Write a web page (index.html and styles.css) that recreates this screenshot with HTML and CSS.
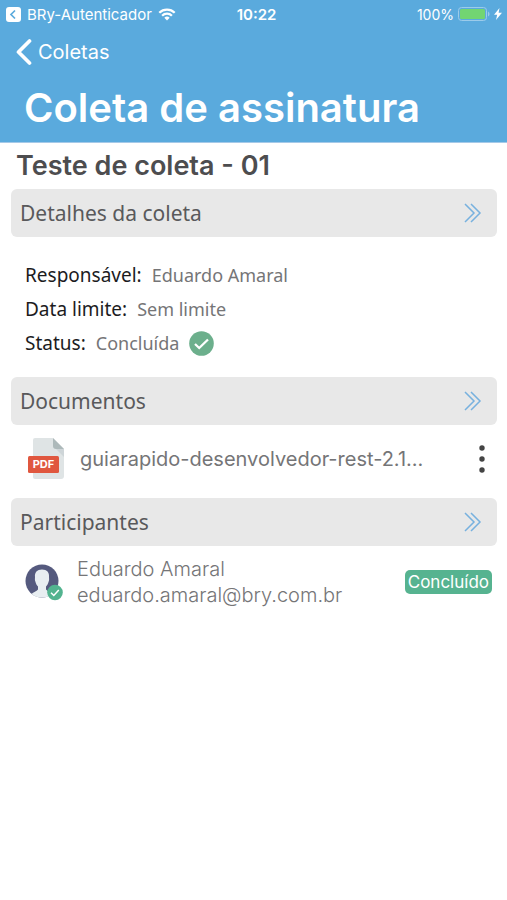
FILE: index.html
```html
<!DOCTYPE html>
<html lang="pt-BR">
<head>
<meta charset="utf-8">
<meta name="viewport" content="width=device-width, initial-scale=1">
<title>Coleta de assinatura</title>
<link rel="stylesheet" href="styles.css">
</head>
<body>
<header class="header">
  <div class="status-bar">
    <a class="return-app" href="#">
      <svg width="15" height="15" viewBox="0 0 15 15" aria-hidden="true"><rect width="15" height="15" rx="3" fill="#fff"/><path d="M9 3.5 5 7.5l4 4" fill="none" stroke="#5aaadd" stroke-width="1.7"/></svg>
      <span>BRy-Autenticador</span>
      <svg width="18" height="13" viewBox="0 0 18 13" aria-hidden="true"><g fill="none" stroke="#fff" stroke-width="2.3"><path d="M1.3 4.7a11 11 0 0 1 15.4 0"/><path d="M4.1 7.7a7 7 0 0 1 9.8 0"/></g><path d="M6.3 9.8a3.9 3.9 0 0 1 5.4 0L9 12.5z" fill="#fff"/></svg>
    </a>
    <time class="clock">10:22</time>
    <div class="battery">
      <span>100%</span>
      <svg width="32" height="14" viewBox="0 0 32 14" aria-hidden="true"><rect x=".5" y=".5" width="28" height="13" rx="3" fill="none" stroke="#9ccbea"/><rect x="2" y="2" width="25" height="10" rx="1.5" fill="#72d572"/><path d="M30 4.5q1.6 1 1.6 2.500t-1.600 2.500z" fill="#9ccbea"/></svg>
      <svg width="8" height="12" viewBox="0 0 8 12" aria-hidden="true"><path d="M5.500 0 0 6.800h3.200L2 12l6-7.200H4.600z" fill="#fff"/></svg>
    </div>
  </div>
  <nav>
    <a class="back" href="#">
      <svg width="16" height="26" viewBox="0 0 16 26" aria-hidden="true"><path d="M13.500 2 2.500 13l11 11" fill="none" stroke="#fff" stroke-width="3.700" stroke-linecap="round" stroke-linejoin="round"/></svg>
      <span>Coletas</span>
    </a>
  </nav>
  <h1 class="title">Coleta de assinatura</h1>
</header>
<main class="content">
  <h2 class="name">Teste de coleta - 01</h2>

  <button class="section-head" type="button">
    <span>Detalhes da coleta</span>
    <svg width="18" height="20" viewBox="0 0 18 20" aria-hidden="true"><path d="m1 1 9 9-9 9M7 1l9 9-9 9" fill="none" stroke="#77b1df" stroke-width="1.500"/></svg>
  </button>
  <dl class="details">
    <div class="detail"><dt>Responsável:</dt><dd>Eduardo Amaral</dd></div>
    <div class="detail"><dt>Data limite:</dt><dd>Sem limite</dd></div>
    <div class="detail"><dt>Status:</dt><dd>Concluída</dd>
      <svg width="25" height="25" viewBox="0 0 25 25" aria-hidden="true"><circle cx="12.500" cy="12.500" r="12.300" fill="#6caf8c"/><path d="m6 13 4.200 4L19 8.500" fill="none" stroke="#fff" stroke-width="2.300"/></svg>
    </div>
  </dl>

  <button class="section-head" type="button">
    <span>Documentos</span>
    <svg width="18" height="20" viewBox="0 0 18 20" aria-hidden="true"><path d="m1 1 9 9-9 9M7 1l9 9-9 9" fill="none" stroke="#77b1df" stroke-width="1.500"/></svg>
  </button>
  <div class="document">
    <svg width="36" height="41" viewBox="0 0 36 41" aria-hidden="true"><path d="M7 0h18l11 11v27a3 3 0 0 1-3 3H7a2 2 0 0 1-2-2V2a2 2 0 0 1 2-2z" fill="#dfe4e5"/><path d="m28 11 8 8v-8z" fill="#ced5d8"/><path d="M25 0 36 11h-8a3 3 0 0 1-3-3z" fill="#adb9ba"/><rect y="18" width="31" height="17" rx="1.500" fill="#e0573f"/><text class="pdf-label" x="15.500" y="30" text-anchor="middle">PDF</text></svg>
    <span class="file-name">guiarapido-desenvolvedor-rest-2.1...</span>
    <button class="menu" type="button" aria-label="Opções">
      <svg width="6" height="28" viewBox="0 0 6 28" aria-hidden="true"><g fill="#444"><circle cx="3" cy="3" r="2.700"/><circle cx="3" cy="14" r="2.700"/><circle cx="3" cy="25" r="2.700"/></g></svg>
    </button>
  </div>

  <button class="section-head" type="button">
    <span>Participantes</span>
    <svg width="18" height="20" viewBox="0 0 18 20" aria-hidden="true"><path d="m1 1 9 9-9 9M7 1l9 9-9 9" fill="none" stroke="#77b1df" stroke-width="1.500"/></svg>
  </button>
  <div class="participant">
    <svg width="38" height="37" viewBox="0 0 38 37" aria-hidden="true"><circle cx="17" cy="17" r="16.500" fill="#555a7e"/><path d="M17 5.500c-5 0-7.500 3-7 7.500 0 2-.5 2.500.5 5 .5 2 1.200 3 2.500 4.500v3c-1.500 2-4.500 2.500-6.500 4.500 5.500 4.700 15.500 4.700 21 0-2-2-5-2.500-6.500-4.500v-3c1.300-1.500 2-2.500 2.500-4.500 1-2.500.5-3 .5-5 .5-4.500-2-7.500-7-7.500z" fill="#e8eef1"/><circle cx="30" cy="28.500" r="7.800" fill="#52b38f"/><path d="m26 28.800 2.800 2.700 5-5.500" fill="none" stroke="#fff" stroke-width="1.500"/></svg>
    <div class="person">
      <span>Eduardo Amaral</span>
      <span>eduardo.amaral@bry.com.br</span>
    </div>
    <span class="badge">Concluído</span>
  </div>
</main>
</body>
</html>
```
FILE: styles.css
```css
* {
  box-sizing: border-box;
}

body {
  margin: 0;
  background: #fff;
  color: #757577;
  font-family: Inter, "Liberation Sans", sans-serif;
}

h1, h2, dl, dt, dd {
  margin: 0;
}

a {
  color: inherit;
  text-decoration: none;
}

svg {
  display: block;
  flex: none;
}

.header {
  background: #5aaadd;
  color: #fff;
  border-bottom: 1px solid #a5c9e8;
}

.status-bar {
  display: grid;
  grid-template-columns: 1fr auto 1fr;
  align-items: center;
  height: 28px;
  padding-left: 6px;
  font-size: 15px;
}

.return-app {
  display: flex;
  align-items: center;
  gap: 6px;
}

.clock {
  font-weight: 600;
}

.battery {
  display: flex;
  align-items: center;
  justify-content: flex-end;
  gap: 4px;
  padding-right: 5px;
  font-size: 14px;
}

.back {
  display: flex;
  align-items: center;
  gap: 6px;
  width: max-content;
  height: 48px;
  padding-left: 16px;
  font-size: 20px;
}

.title {
  padding: 8px 24px 10px;
  font-size: 40px;
  font-weight: 600;
  line-height: 48px;
}

.content {
  padding: 6px 10px 0 11px;
}

.name {
  padding: 0 5px 6px;
  color: #4d4d4f;
  font-size: 27px;
  font-weight: 600;
  line-height: 34px;
}

.section-head {
  display: flex;
  align-items: center;
  justify-content: space-between;
  width: 100%;
  height: 48px;
  padding: 0 15px 0 9px;
  border: 0;
  border-radius: 6px;
  background: #e8e8e8;
  color: #59595b;
  font-family: "Noto Sans", sans-serif;
  font-size: 21px;
  text-align: left;
}

.details {
  padding: 21px 14px 17px;
  font-family: "Noto Sans", sans-serif;
  font-size: 19px;
}

.detail {
  display: flex;
  align-items: center;
  gap: 10px;
  height: 34px;
}

.detail dt {
  color: #1c1c1e;
}

.detail dd {
  font-size: 18px;
}

.document {
  display: flex;
  align-items: center;
  height: 73px;
  padding: 0 9px 6px 17px;
  font-size: 20px;
}

.pdf-label {
  fill: #fff;
  font-family: Inter, sans-serif;
  font-size: 11px;
  font-weight: 700;
}

.file-name {
  flex: 1;
  min-width: 0;
  margin-left: 16px;
  overflow: hidden;
  white-space: nowrap;
}

.menu {
  padding: 0 3px;
  border: 0;
  background: none;
}

.participant {
  display: flex;
  align-items: center;
  gap: 14px;
  padding: 10px 5px 0 14px;
  font-size: 20px;
}

.person {
  display: flex;
  flex: 1;
  flex-direction: column;
  font-weight: 300;
  line-height: 26px;
}

.badge {
  padding: 0 3px;
  border-radius: 5px;
  background: #56b390;
  color: #fff;
  font-size: 17px;
  line-height: 24px;
}
```
